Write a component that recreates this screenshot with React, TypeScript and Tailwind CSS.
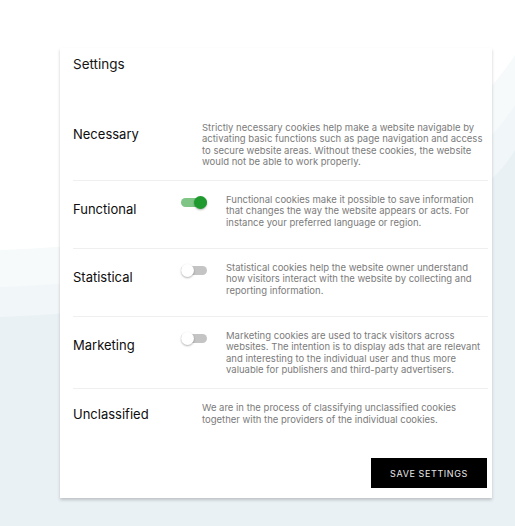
import React from 'react';

interface Category {
  name: string;
  text: string;
  toggle?: boolean;
  on?: boolean;
}

const categories: Category[] = [
  {
    name: 'Necessary',
    text: 'Strictly necessary cookies help make a website navigable by activating basic functions such as page navigation and access to secure website areas. Without these cookies, the website would not be able to work properly.',
  },
  {
    name: 'Functional',
    toggle: true,
    on: true,
    text: 'Functional cookies make it possible to save information that changes the way the website appears or acts. For instance your preferred language or region.',
  },
  {
    name: 'Statistical',
    toggle: true,
    on: false,
    text: 'Statistical cookies help the website owner understand how visitors interact with the website by collecting and reporting information.',
  },
  {
    name: 'Marketing',
    toggle: true,
    on: false,
    text: 'Marketing cookies are used to track visitors across websites. The intention is to display ads that are relevant and interesting to the individual user and thus more valuable for publishers and third-party advertisers.',
  },
  {
    name: 'Unclassified',
    text: 'We are in the process of classifying unclassified cookies together with the providers of the individual cookies.',
  },
];

const Toggle: React.FC<{ on: boolean }> = ({ on }) => (
  <div className="relative mt-[2px] h-[13px] w-[26px] shrink-0">
    <div
      className={`absolute left-0 top-[2px] h-[9px] w-[26px] rounded-full ${on ? 'bg-[#7fc585]' : 'bg-[#c4c4c4]'}`}
    />
    <div
      className={`absolute top-0 h-[13px] w-[13px] rounded-full shadow-[0_1px_2px_rgba(0,0,0,0.3)] ${on ? 'right-0 bg-[#1f9a2f]' : 'left-0 bg-white'}`}
    />
  </div>
);

const Row: React.FC<{ item: Category; last: boolean }> = ({ item, last }) => (
  <div
    className={`flex min-h-[68px] items-start pt-[13px] pb-[13px] ${last ? '' : 'border-b border-[#efefef]'}`}
  >
    {item.toggle ? (
      <>
        <div className="mt-[5px] w-[108px] shrink-0 text-[13px] leading-[20px] text-[#0d0d0d]">{item.name}</div>
        <Toggle on={!!item.on} />
        <p className="ml-[19px] text-[9.5px] leading-[11.3px] text-[#7b7b7b]">{item.text}</p>
      </>
    ) : (
      <>
        <div className="mt-[2px] w-[129px] shrink-0 text-[13px] leading-[20px] text-[#0d0d0d]">{item.name}</div>
        <p className="pr-[4px] text-[9.5px] leading-[11.3px] text-[#7b7b7b]">{item.text}</p>
      </>
    )}
  </div>
);

const Backdrop: React.FC = () => (
  <svg className="absolute inset-0 h-full w-full" viewBox="0 0 515 526" preserveAspectRatio="none">
    <rect width="515" height="526" fill="#ffffff" />
    <path d="M0,250 C200,242 420,200 515,55 L515,526 L0,526 Z" fill="#f7fafb" />
    <path d="M0,287 C210,280 440,225 515,105 L515,526 L0,526 Z" fill="#f1f6f8" />
    <path d="M0,317 C220,310 460,245 515,150 L515,526 L0,526 Z" fill="#eaf1f5" />
  </svg>
);

const App: React.FC = () => (
  <div className="relative h-[526px] w-[515px] overflow-hidden" style={{ fontFamily: 'Inter, "Noto Sans", sans-serif' }}>
    <Backdrop />
    <div className="relative pl-[60px] pt-[48px]">
      <div className="w-[432px] bg-white pl-[13px] pr-[4px] pt-[6px] pb-[10px] shadow-[0_2px_3px_rgba(0,0,0,0.2)]">
        <h1 className="text-[13.5px] leading-[20px] text-[#151515]">Settings</h1>
        <div className="mt-[35px]">
          {categories.map((c, i) => (
            <Row key={c.name} item={c} last={i === categories.length - 1} />
          ))}
        </div>
        <div className="flex justify-end">
          <button className="mr-[1px] mt-[1px] h-[30px] w-[116px] bg-black text-[9px] tracking-[0.6px] text-[#e8e8e8]">
            SAVE SETTINGS
          </button>
        </div>
      </div>
    </div>
  </div>
);

export default App;
